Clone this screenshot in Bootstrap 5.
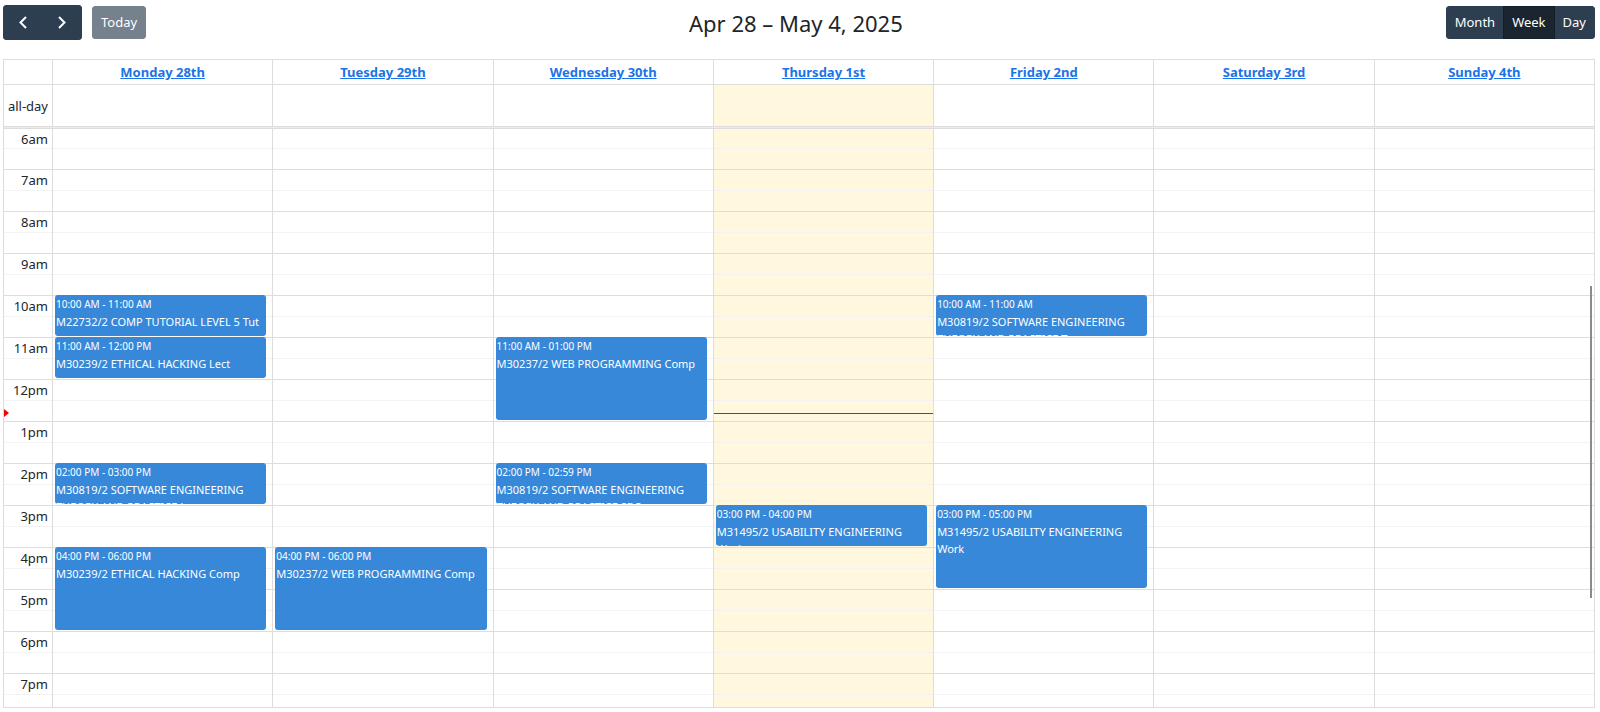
<!DOCTYPE html>
<html lang="en">
<head>
<meta charset="utf-8">
<meta name="viewport" content="width=device-width, initial-scale=1">
<title>Timetable</title>
<link href="https://cdn.jsdelivr.net/npm/bootstrap@5.3.0/dist/css/bootstrap.min.css" rel="stylesheet">
<style>
  body { font-family: "Segoe UI", "Noto Sans", "Open Sans", sans-serif; font-size: 13px; line-height: 20px; color: #212529; }
  .page { padding: 5px 5px 4px 3px; }
  .toolbar { margin-bottom: 19px; min-height: 35px; }
  .toolbar h2 { font-size: 22px; line-height: 28px; font-weight: 400; }
  .btn-cal { --bs-btn-color: #fff; --bs-btn-bg: #2c3e50; --bs-btn-border-color: #2c3e50;
    --bs-btn-hover-color: #fff; --bs-btn-hover-bg: #1e2b37; --bs-btn-hover-border-color: #1a252f;
    --bs-btn-active-color: #fff; --bs-btn-active-bg: #1a252f; --bs-btn-active-border-color: #151e27;
    --bs-btn-disabled-color: #fff; --bs-btn-disabled-bg: #2c3e50; --bs-btn-disabled-border-color: #2c3e50;
    --bs-btn-font-size: 13px; --bs-btn-padding-x: 8px; --bs-btn-padding-y: 5px;
    --bs-btn-border-radius: 3px; line-height: 21px; }
  .btn-cal:disabled { opacity: .65; }
  .btn-arrow { --bs-btn-padding-x: 12px; --bs-btn-padding-y: 6px; }
  .btn-arrow svg { display: block; width: 14px; height: 21px; }
  .nav-tools { gap: 10px; }

  .week { width: 100%; table-layout: fixed; border-collapse: separate; border-spacing: 0; border: solid #ddd; border-width: 1px 0 0 1px; }
  .week th, .week td { padding: 0; border: solid #ddd; border-width: 0 1px 1px 0; position: relative; }
  .axis { width: 49px; }
  .days th { height: 25px; text-align: center; line-height: 24px; }
  .days a { color: #1a73e8; }
  .allday > * { height: 42px; }
  .week tbody th { font-weight: 400; text-align: right; padding-right: 4px; }
  .hour > th { vertical-align: top; line-height: 21px; }
  .hour > * { height: 42px; background: linear-gradient(#f3f3f3, #f3f3f3) 0 20px / 100% 1px no-repeat; }
  .hour.first > * { height: 41px; background-position: 0 19px; }
  .hour:last-child > * { height: 34px; }
  .allday > :nth-child(5), .hour > :nth-child(5) { background-color: #fff8df; }
  .week .split td { height: 2px; background: #ececec; }

  .event { position: absolute; z-index: 1; top: -1px; left: 2px; right: 6px; height: 41px; overflow: hidden;
    padding: 1px; background: #3788d8; border-radius: 3px; color: #fff; font-size: 11px; line-height: 17px; text-decoration: none; }
  .event:hover { color: #fff; }
  .event.two { height: 83px; }
  .event time { display: block; font-size: 10px; line-height: 16px; margin-bottom: 1px; white-space: nowrap; }
  .now-line { position: absolute; z-index: 2; left: 0; right: 0; top: 33px; height: 1px; background: #c02020; }
  .now-arrow { position: absolute; left: 0; top: 29px; border: solid transparent; border-width: 4px 0 4px 5px; border-left-color: #f00000; }
  .scroll-thumb { position: absolute; z-index: 3; right: 3px; top: 35%; width: 2px; height: 48%; background: #8b8b8b; }
</style>
</head>
<body>
<main class="page">
  <header class="toolbar d-flex justify-content-between align-items-center">
    <div class="nav-tools d-flex align-items-center">
      <div class="btn-group">
        <button type="button" class="btn btn-cal btn-arrow" aria-label="Previous week"><svg viewBox="0 0 14 21" fill="none" stroke="#fff" stroke-width="2"><path d="M10 5 4.500 10.500 10 16"/></svg></button>
        <button type="button" class="btn btn-cal btn-arrow" aria-label="Next week"><svg viewBox="0 0 14 21" fill="none" stroke="#fff" stroke-width="2"><path d="M4 5 9.500 10.500 4 16"/></svg></button>
      </div>
      <button type="button" class="btn btn-cal" disabled>Today</button>
    </div>
    <h2 class="mb-0">Apr 28 – May 4, 2025</h2>
    <div class="btn-group">
      <button type="button" class="btn btn-cal">Month</button>
      <button type="button" class="btn btn-cal active" aria-pressed="true">Week</button>
      <button type="button" class="btn btn-cal">Day</button>
    </div>
  </header>

  <div class="position-relative">
    <table class="week">
      <thead>
        <tr class="days"><th class="axis"></th>
          <th scope="col"><a href="#">Monday 28th</a></th><th scope="col"><a href="#">Tuesday 29th</a></th><th scope="col"><a href="#">Wednesday 30th</a></th><th scope="col"><a href="#">Thursday 1st</a></th><th scope="col"><a href="#">Friday 2nd</a></th><th scope="col"><a href="#">Saturday 3rd</a></th><th scope="col"><a href="#">Sunday 4th</a></th></tr>
      </thead>
      <tbody>
        <tr class="allday"><th scope="row">all-day</th><td></td><td></td><td></td><td></td><td></td><td></td><td></td></tr>
        <tr class="split"><td colspan="8"></td></tr>
        <tr class="hour first"><th scope="row">6am</th><td></td><td></td><td></td><td></td><td></td><td></td><td></td></tr>
        <tr class="hour"><th scope="row">7am</th><td></td><td></td><td></td><td></td><td></td><td></td><td></td></tr>
        <tr class="hour"><th scope="row">8am</th><td></td><td></td><td></td><td></td><td></td><td></td><td></td></tr>
        <tr class="hour"><th scope="row">9am</th><td></td><td></td><td></td><td></td><td></td><td></td><td></td></tr>
        <tr class="hour"><th scope="row">10am</th>
          <td><a class="event" href="#"><time>10:00 AM - 11:00 AM</time>M22732/2 COMP TUTORIAL LEVEL 5 Tut</a></td>
          <td></td><td></td><td></td>
          <td><a class="event" href="#"><time>10:00 AM - 11:00 AM</time>M30819/2 SOFTWARE ENGINEERING<br>THEORY AND PRACTICE T</a></td>
          <td></td><td></td></tr>
        <tr class="hour"><th scope="row">11am</th>
          <td><a class="event" href="#"><time>11:00 AM - 12:00 PM</time>M30239/2 ETHICAL HACKING Lect</a></td>
          <td></td>
          <td><a class="event two" href="#"><time>11:00 AM - 01:00 PM</time>M30237/2 WEB PROGRAMMING Comp</a></td>
          <td></td><td></td><td></td><td></td></tr>
        <tr class="hour"><th scope="row">12pm<span class="now-arrow"></span></th><td></td><td></td><td></td><td><span class="now-line"></span></td><td></td><td></td><td></td></tr>
        <tr class="hour"><th scope="row">1pm</th><td></td><td></td><td></td><td></td><td></td><td></td><td></td></tr>
        <tr class="hour"><th scope="row">2pm</th>
          <td><a class="event" href="#"><time>02:00 PM - 03:00 PM</time>M30819/2 SOFTWARE ENGINEERING<br>THEORY AND PRACTICE L</a></td>
          <td></td>
          <td><a class="event" href="#"><time>02:00 PM - 02:59 PM</time>M30819/2 SOFTWARE ENGINEERING<br>THEORY AND PRACTICE SBC</a></td>
          <td></td><td></td><td></td><td></td></tr>
        <tr class="hour"><th scope="row">3pm</th><td></td><td></td><td></td>
          <td><a class="event" href="#"><time>03:00 PM - 04:00 PM</time>M31495/2 USABILITY ENGINEERING<br>Work</a></td>
          <td><a class="event two" href="#"><time>03:00 PM - 05:00 PM</time>M31495/2 USABILITY ENGINEERING<br>Work</a></td>
          <td></td><td></td></tr>
        <tr class="hour"><th scope="row">4pm</th>
          <td><a class="event two" href="#"><time>04:00 PM - 06:00 PM</time>M30239/2 ETHICAL HACKING Comp</a></td>
          <td><a class="event two" href="#"><time>04:00 PM - 06:00 PM</time>M30237/2 WEB PROGRAMMING Comp</a></td>
          <td></td><td></td><td></td><td></td><td></td></tr>
        <tr class="hour"><th scope="row">5pm</th><td></td><td></td><td></td><td></td><td></td><td></td><td></td></tr>
        <tr class="hour"><th scope="row">6pm</th><td></td><td></td><td></td><td></td><td></td><td></td><td></td></tr>
        <tr class="hour"><th scope="row">7pm</th><td></td><td></td><td></td><td></td><td></td><td></td><td></td></tr>
      </tbody>
    </table>
    <span class="scroll-thumb"></span>
  </div>
</main>
<script src="https://cdn.jsdelivr.net/npm/bootstrap@5.3.0/dist/js/bootstrap.bundle.min.js"></script>
</body>
</html>
